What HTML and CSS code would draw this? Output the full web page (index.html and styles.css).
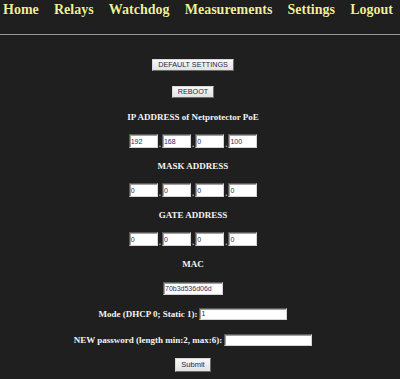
FILE: index.html
```html
<!DOCTYPE html>
<html>
<head>
<meta charset="utf-8">
<title>Settings</title>
<link rel="stylesheet" href="styles.css">
</head>
<body>
<nav class="topnav">
  <a href="#">Home</a>
  <a href="#">Relays</a>
  <a href="#">Watchdog</a>
  <a href="#">Measurements</a>
  <a href="#">Settings</a>
  <a href="#">Logout</a>
</nav>
<form class="settings">
  <div class="row"><button type="button" class="btn">DEFAULT SETTINGS</button></div>
  <div class="row"><button type="button" class="btn">REBOOT</button></div>
  <div class="row label">IP ADDRESS of Netprotector PoE</div>
  <div class="row octets">
    <input class="oct" value="192"><span class="dot">.</span><input class="oct" value="168"><span class="dot">.</span><input class="oct" value="0"><span class="dot">.</span><input class="oct" value="100">
  </div>
  <div class="row label">MASK ADDRESS</div>
  <div class="row octets">
    <input class="oct" value="0"><span class="dot">.</span><input class="oct" value="0"><span class="dot">.</span><input class="oct" value="0"><span class="dot">.</span><input class="oct" value="0">
  </div>
  <div class="row label">GATE ADDRESS</div>
  <div class="row octets">
    <input class="oct" value="0"><span class="dot">.</span><input class="oct" value="0"><span class="dot">.</span><input class="oct" value="0"><span class="dot">.</span><input class="oct" value="0">
  </div>
  <div class="row label">MAC</div>
  <div class="row"><input class="mac" value="70b3d536d06d"></div>
  <div class="row label field"><span>Mode (DHCP 0; Static 1):</span><input class="wide" value="1"></div>
  <div class="row label field"><span>NEW password (length min:2, max:6):</span><input class="wide" value=""></div>
  <div class="row"><button type="button" class="btn submit">Submit</button></div>
</form>
</body>
</html>
```

FILE: styles.css
```css
html, body {
  margin: 0;
  padding: 0;
  background: #1f1f1f;
}
body {
  font-family: "Liberation Serif", "Times New Roman", serif;
  color: #f2f2f2;
}
.topnav {
  display: flex;
  justify-content: space-between;
  align-items: flex-start;
  height: 35px;
  box-sizing: border-box;
  padding: 2px 7px 0 3px;
  border-bottom: 1px solid #9a9a9a;
}
.topnav a {
  color: #f0f09a;
  font-weight: bold;
  font-size: 14px;
  text-decoration: none;
  text-shadow: 0 0 1px #000;
}
.settings {
  display: grid;
  grid-template-rows: 27px 26px 24.5px 24.5px 24.5px 24.5px 24.5px 24.5px 24.5px 24.5px 26px 26px 25.5px;
  padding: 16.5px 14px 0 0;
  justify-items: center;
  align-items: center;
}
.row {
  display: flex;
  align-items: center;
  justify-content: center;
}
.label {
  font-weight: bold;
  font-size: 9px;
  color: #f4f4f4;
}
.btn {
  font-family: "Liberation Sans", Arial, sans-serif;
  font-size: 7.2px;
  line-height: 8px;
  color: #28244e;
  background: linear-gradient(#f8f8f8, #e2e2e2);
  border: 1px solid;
  border-color: #d8d8d8 #6a6a6a #6a6a6a #d8d8d8;
  padding: 1px 5px;
  margin: 0;
  height: 12px;
  box-sizing: border-box;
}
.submit {
  height: 14px;
  padding: 2px 5px;
  font-size: 7.5px;
}
input {
  font-family: "Liberation Sans", Arial, sans-serif;
  font-size: 7px;
  color: #302a5c;
  background: #fff;
  border: 1px solid;
  border-color: #5a5a5a #d4d4d4 #d4d4d4 #5a5a5a;
  box-shadow: inset 1px 1px 0 #a0a0a0;
  padding: 0 1px;
  margin: 0;
  box-sizing: border-box;
  height: 14px;
  outline: none;
}
.octets {
  align-items: flex-end;
}
.oct {
  width: 29px;
}
.dot {
  font-size: 9px;
  font-weight: bold;
  line-height: 8px;
  color: #bbb;
  margin: 0 1px;
}
.mac {
  width: 60px;
  height: 13px;
}
.field input {
  margin-left: 2px;
  height: 12px;
}
.wide {
  width: 88px;
}
```
